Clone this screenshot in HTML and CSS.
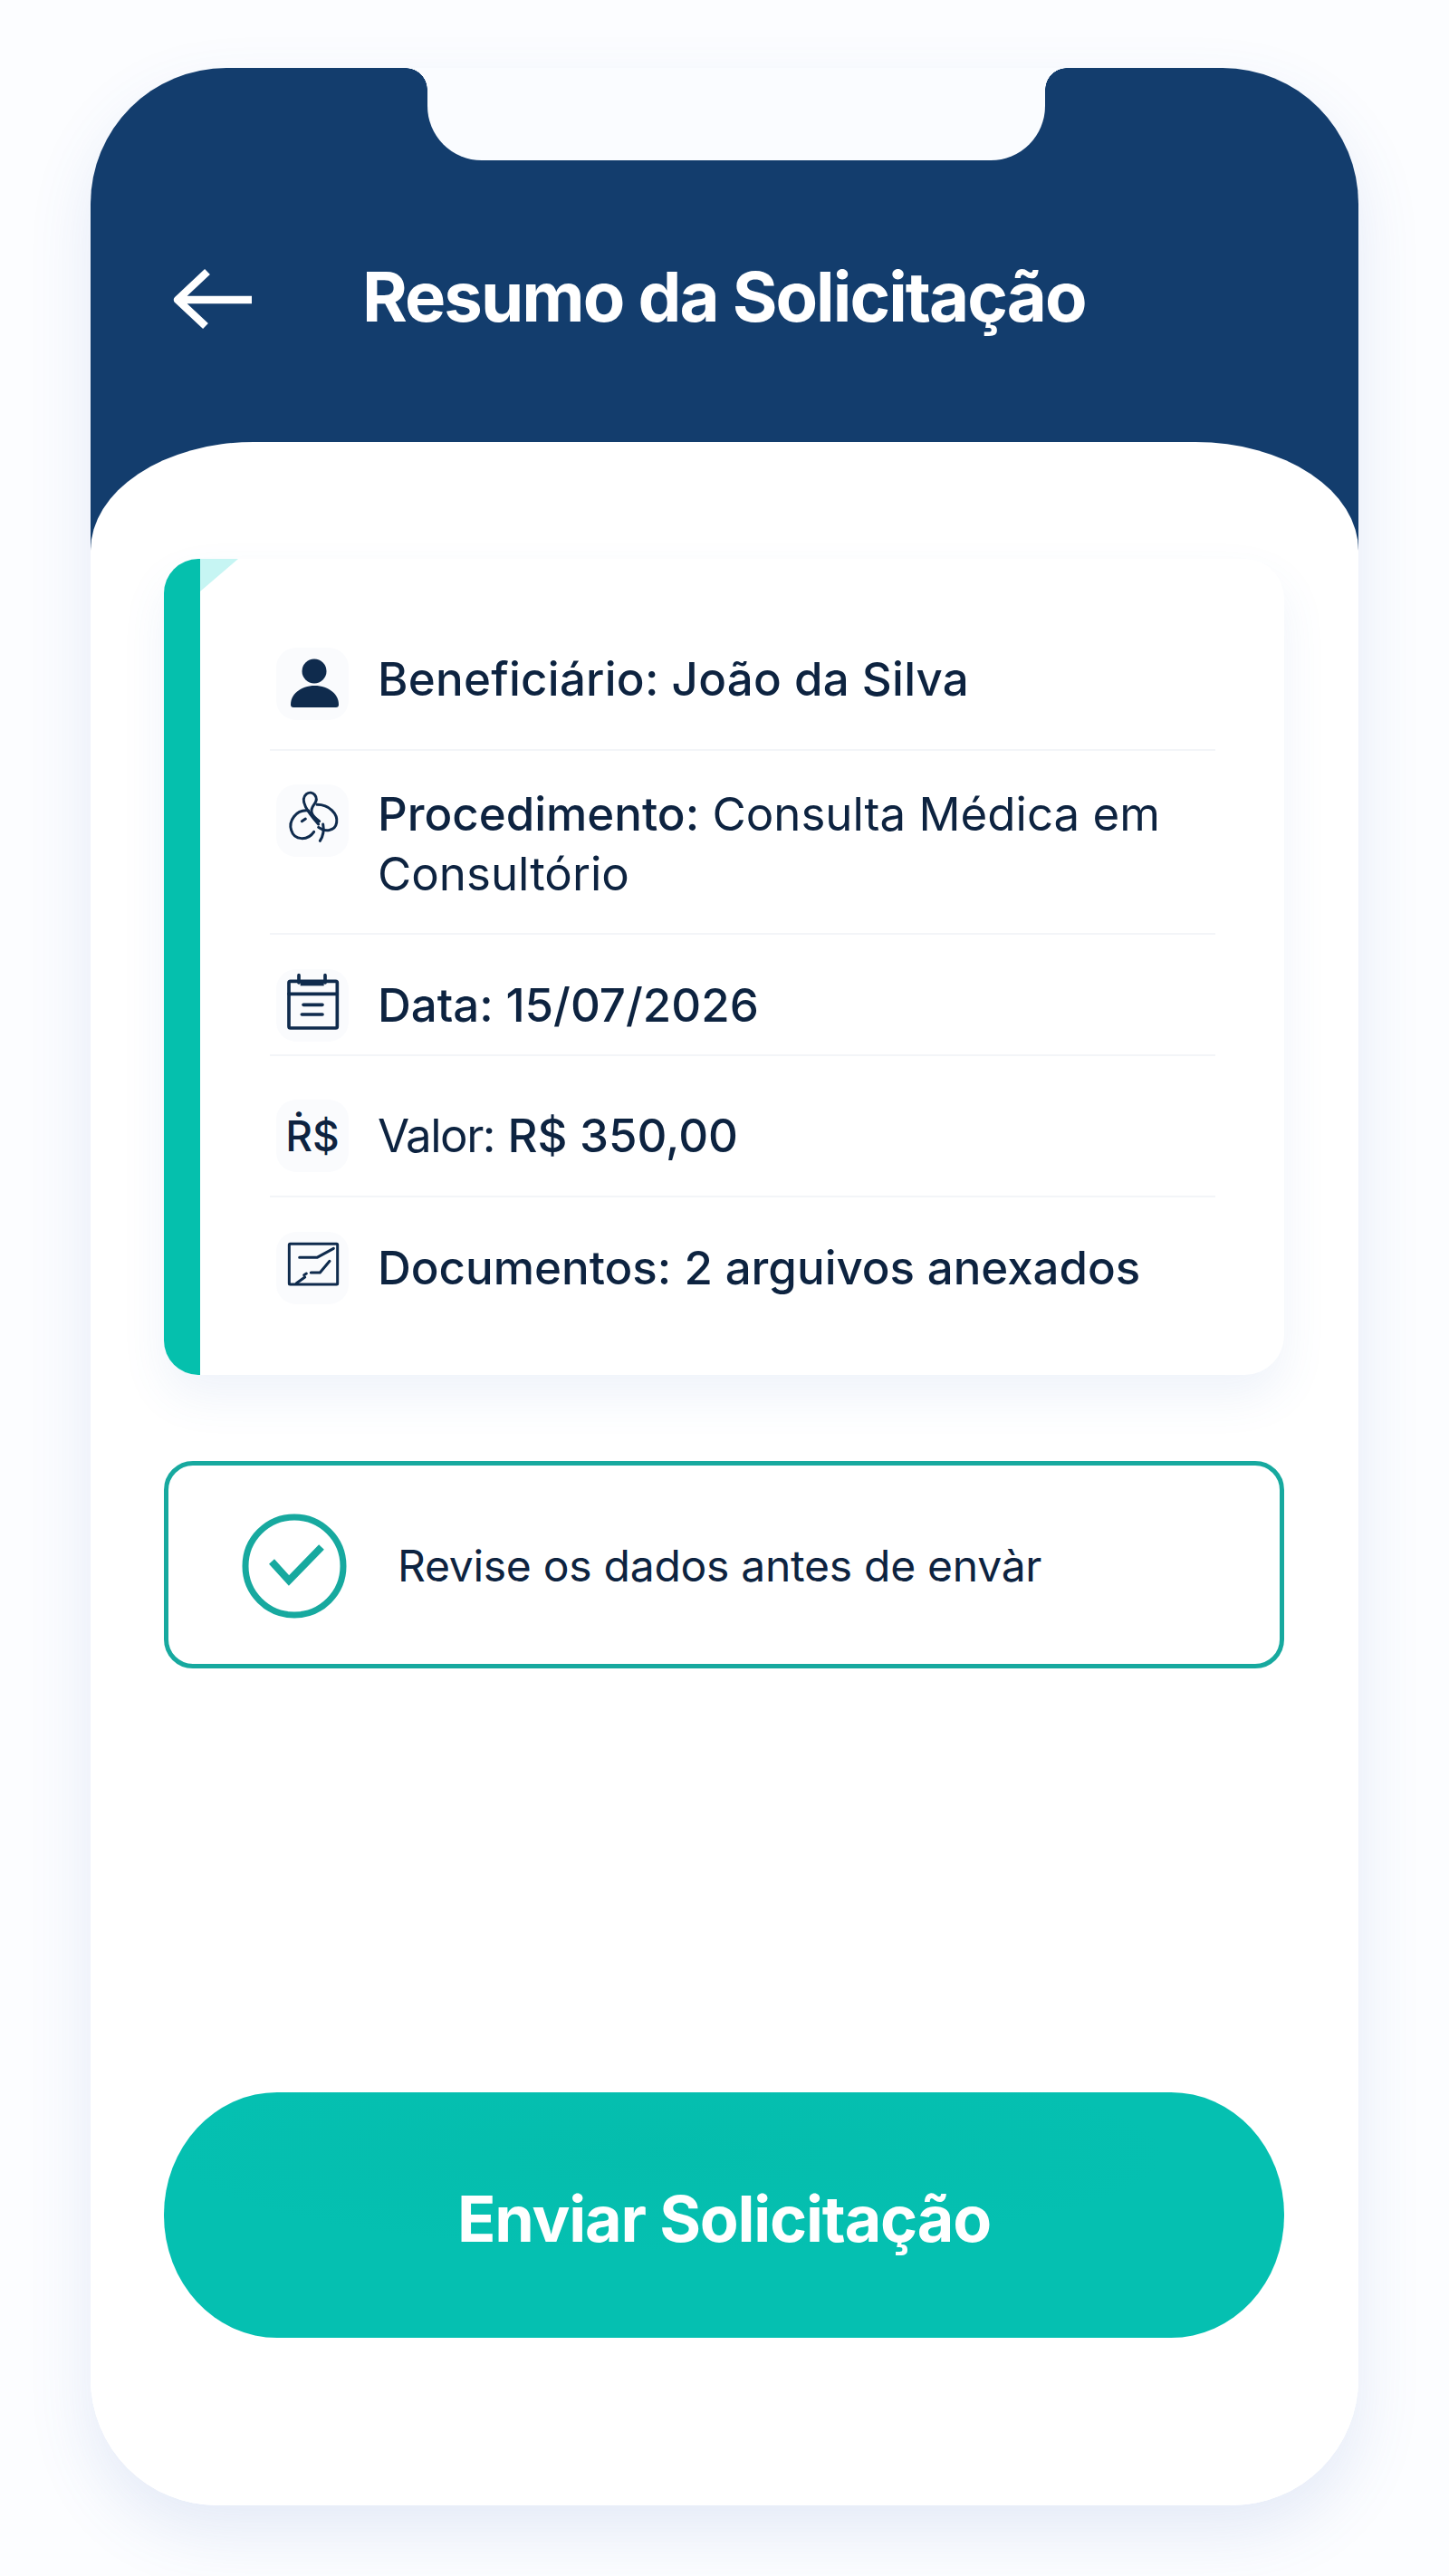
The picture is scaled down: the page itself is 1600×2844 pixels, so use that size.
FILE: index.html
```html
<!DOCTYPE html>
<html lang="pt-BR">
<head>
<meta charset="utf-8">
<title>Resumo da Solicitação</title>
<link rel="stylesheet" href="styles.css">
</head>
<body>
<main class="phone">
  <div class="notch"></div>
  <header class="header">
    <svg class="back" viewBox="0 0 90 70" aria-hidden="true"><path d="M39 5 6 36l31 29M6 36h82"/></svg>
    <h1 class="title">Resumo da Solicitação</h1>
  </header>
  <section class="sheet">
    <div class="card">
      <div class="card-bar"></div>
      <ul class="rows">
        <li class="row row-beneficiary">
          <span class="tile"><svg class="ico" viewBox="0 0 80 80"><circle class="solid" cx="42" cy="26" r="13.5"/><path class="solid" d="M19 66a3 3 0 0 1-3-3c0-13 13-21 26.500-21S69 50 69 63a3 3 0 0 1-3 3Z"/></svg></span>
          <p class="text"><span class="med wide">Beneficiário: João da Silva</span></p>
        </li>
        <li class="row row-procedure">
          <span class="tile"><svg class="ico line-9" viewBox="405 558 240 240"><path d="M512 645C470 640 445 680 455 710c10 35 55 35 75 5"/><path d="M540 625c40 0 70 30 65 60-5 30-40 30-60 15"/><path d="M545 690c-35-40-65-80-40-100 20-15 45 10 25 35-15 20-10 35 18 55"/><path d="M560 690c5 25 0 40-10 55"/><path d="m490 680 12-8"/></svg></span>
          <p class="text"><span class="med">Procedimento:</span> <span>Consulta Médica em</span> <span>Consultório</span></p>
        </li>
        <li class="row row-date">
          <span class="tile"><svg class="ico line-11" viewBox="45 90 240 240"><rect x="87" y="130" width="160" height="155" rx="5"/><path d="M87 172h160M135 208h63M130 240h68"/><path d="M120 135v-25M207 135v-25"/><path class="band" d="M125 137h78"/></svg></span>
          <p class="text"><span class="med">Data: 15/07/2026</span></p>
        </li>
        <li class="row row-value">
          <span class="tile tile-text">Ṙ$</span>
          <p class="text"><span class="tight">Valor:</span> <span class="mid">R$ 350,00</span></p>
        </li>
        <li class="row row-docs">
          <span class="tile"><svg class="ico line-9" viewBox="405 690 240 240"><rect x="448" y="730" width="160" height="134" rx="3"/><path d="M482 775h58l55-30"/><path d="M520 825h30l32-38M505 828l-8 5"/><path d="M472 860l28-20"/></svg></span>
          <p class="text"><span class="med">Documentos:</span> <span class="mid">2 arguivos anexados</span></p>
        </li>
      </ul>
    </div>
    <div class="notice">
      <svg class="check" viewBox="0 0 116 116" aria-hidden="true"><circle cx="58" cy="58" r="54"/><path d="M33 53l19 21 36-37"/></svg>
      <p class="notice-text">Revise os dados antes de envàr</p>
    </div>
    <button class="submit" type="button">Enviar Solicitação</button>
  </section>
</main>
</body>
</html>
```
FILE: styles.css
```css
* { box-sizing: border-box; }
html, body { margin: 0; }
body {
  width: 1600px;
  height: 2844px;
  padding: 75px 100px 78px;
  background: #fcfdff;
  font-family: Inter, "Liberation Sans", sans-serif;
  color: #0d2340;
  overflow: hidden;
}
.phone {
  position: relative;
  height: 2691px;
  display: flex;
  flex-direction: column;
  border-radius: 150px 150px 140px 140px;
  background: linear-gradient(#133d6d 545px, #fff 545px);
  box-shadow: 0 30px 70px rgba(70, 110, 190, .13);
}
.notch {
  position: absolute;
  left: 372px;
  top: 0;
  width: 682px;
  height: 102px;
  background: #fafcff;
  border-radius: 0 0 60px 60px;
}
.notch::before, .notch::after {
  content: "";
  position: absolute;
  top: 0;
  width: 24px;
  height: 24px;
}
.notch::before { left: -24px; background: radial-gradient(circle at 0 100%, transparent 23.5px, #fafcff 24px); }
.notch::after { right: -24px; background: radial-gradient(circle at 100% 100%, transparent 23.5px, #fafcff 24px); }
.header {
  height: 413px;
  flex: none;
  display: flex;
  align-items: center;
  gap: 120px;
  padding: 90px 0 0 90px;
}
.back { width: 90px; height: 70px; flex: none; margin-top: 7px; }
.back path { fill: none; stroke: #fff; stroke-width: 8.500; stroke-linejoin: round; stroke-linecap: butt; }
.title { margin: 0; font-size: 76px; line-height: 88px; font-weight: 700; letter-spacing: -1.95px; color: #fff; }
.sheet {
  flex: 1;
  display: flex;
  flex-direction: column;
  padding: 129px 82px 185px 81px;
  background: #fff;
  border-radius: 180px 180px 140px 140px / 120px 120px 140px 140px;
}
.card {
  display: flex;
  height: 901px;
  flex: none;
  overflow: hidden;
  background: #fff;
  border-radius: 38px 44px 44px 38px;
  box-shadow: 0 24px 50px rgba(80, 120, 200, .09);
}
.card-bar { position: relative; width: 40px; flex: none; background: #05c0ad; }
.card-bar::after {
  content: "";
  position: absolute;
  left: 40px;
  top: 0;
  width: 42px;
  height: 36px;
  background: #c6f5f3;
  clip-path: polygon(0 0, 100% 0, 0 100%);
}
.rows { flex: 1; list-style: none; margin: 0; padding: 0 76px 0 77px; }
.row { display: flex; align-items: flex-start; gap: 32px; border-bottom: 2px solid #f3f5f8; padding-left: 7px; }
.row:last-child { border-bottom: 0; }
.row-beneficiary { padding-top: 100px; padding-bottom: 32px; }
.row-procedure { padding-top: 37px; padding-bottom: 32px; }
.row-date { padding-top: 45px; padding-bottom: 14px; }
.row-value { padding-top: 55px; padding-bottom: 26px; }
.row-docs { padding-top: 45px; }
.tile {
  flex: none;
  width: 80px;
  height: 80px;
  margin-top: -7px;
  display: flex;
  align-items: center;
  justify-content: center;
  background: #fafbfd;
  border-radius: 22px;
}
.row-beneficiary .tile { margin-top: -2px; }
.row-procedure .tile { margin-top: 0; }
.tile-text { font-size: 46px; font-weight: 500; }
.ico { width: 80px; height: 80px; display: block; }
.ico .solid { fill: #0f2b4d; }
.line-9, .line-11 { fill: none; stroke: #0f2b4d; stroke-linecap: round; stroke-linejoin: round; }
.line-9 { stroke-width: 9; }
.line-11 { stroke-width: 11; }
.ico .band { stroke-width: 16; stroke-linecap: butt; }
.text { margin: 0; font-size: 51px; line-height: 66px; font-weight: 400; }
.med { font-weight: 500; }
.wide { letter-spacing: .27px; }
.tight { letter-spacing: -1.5px; }
.mid { font-weight: 450; }
.notice {
  height: 229px;
  flex: none;
  margin-top: 95px;
  display: flex;
  align-items: center;
  gap: 56px;
  padding: 3px 0 0 81px;
  border: 5px solid #17a99f;
  border-radius: 32px;
}
.check { width: 116px; height: 116px; flex: none; }
.check circle, .check path { fill: none; stroke: #17a99f; stroke-width: 7; }
.check path { stroke-width: 8; }
.notice-text { margin: 0; font-size: 48px; line-height: 60px; letter-spacing: -.27px; }
.submit {
  margin-top: auto;
  height: 271px;
  flex: none;
  border: 0;
  padding-top: 9px;
  border-radius: 125px / 135px;
  background: radial-gradient(ellipse 45% 40% at 45% 25%, rgba(0, 165, 140, .12), transparent), #05c0b1;
  color: #fff;
  font-family: inherit;
  font-size: 70px;
  font-weight: 700;
  letter-spacing: -1.2px;
}
```
